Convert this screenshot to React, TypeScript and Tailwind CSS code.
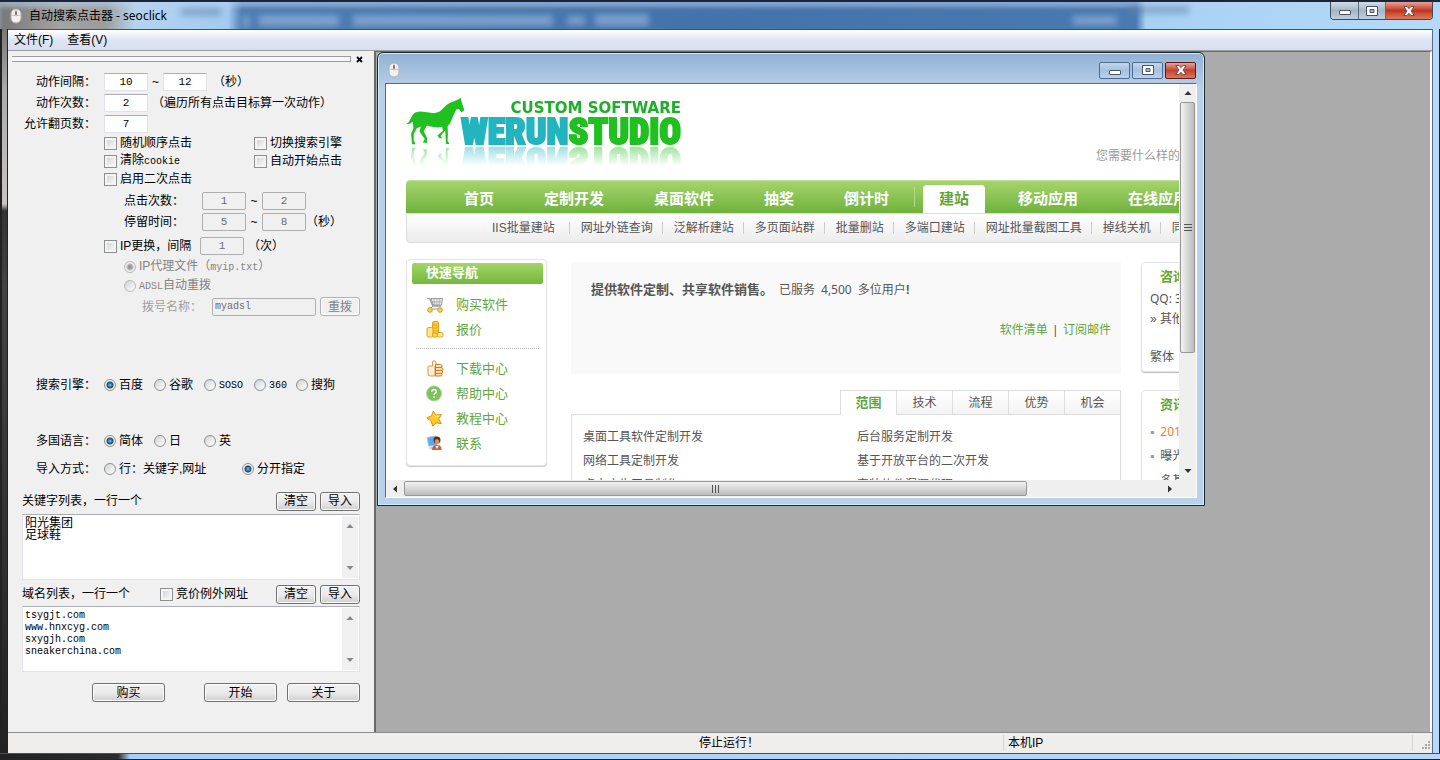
/**
 * Seoclick main window
 *
 * - Title bar, menu bar and status bar
 * - Docked settings panel on the left
 * - MDI area with the embedded browser window
 */

import React, { useState } from 'react';

const NAV_LEFT = ['首页', '定制开发', '桌面软件', '抽奖', '倒计时'];
const NAV_RIGHT = ['移动应用', '在线应用'];

const SUB_NAV = [
  'IIS批量建站',
  '网址外链查询',
  '泛解析建站',
  '多页面站群',
  '批量删站',
  '多端口建站',
  '网址批量截图工具',
  '掉线关机',
  '同步工具',
];

const TABS = ['范围', '技术', '流程', '优势', '机会'];

/* ---------- Icons ---------- */

const MouseIcon: React.FC = () => (
  <svg width="12" height="16" viewBox="0 0 12 16" className="shrink-0">
    <rect x="1" y="1" width="10" height="14" rx="5" fill="#f4f2f0" stroke="#b5b0ad" />
    <path d="M6 1v6M1.500 7q4.500 1.500 9 0" stroke="#c2bdba" fill="none" />
    <rect x="5" y="3" width="2" height="4" rx="1" fill="#777" />
  </svg>
);

const MinimizeGlyph: React.FC = () => (
  <svg width="12" height="11" viewBox="0 0 12 11">
    <rect x="0.500" y="5.500" width="11" height="4" rx="0.500" fill="#fff" stroke="#4a5568" />
  </svg>
);

const MaximizeGlyph: React.FC = () => (
  <svg width="12" height="10" viewBox="0 0 12 10">
    <path d="M.5.5h11v9H.5zM4 3.500v3h4v-3z" fill="#fff" stroke="#4a5568" fillRule="evenodd" />
  </svg>
);

const CloseGlyph: React.FC = () => (
  <svg width="12" height="10" viewBox="0 0 12 10">
    <path
      d="M.8.5h3.200L6 2.700 8 .5h3.200L8 5l3.200 4.500H8L6 7.300 4 9.500H.8L4 5z"
      fill="#fff"
      stroke="#5b3a3a"
      strokeWidth="0.800"
    />
  </svg>
);

const CartIcon: React.FC = () => (
  <svg width="18" height="16" viewBox="0 0 18 16" fill="none">
    <path d="M1 1l3 1 3 7h8" stroke="#999" strokeWidth="1.300" />
    <path d="M5 1.500h11.500l-1 6.500H7.500z" fill="#ececec" stroke="#999" />
    <path d="M8 2l1 6M11 2v6M13.800 2l-.6 6M6 4.800h10" stroke="#aaa" strokeWidth="0.800" />
    <path d="M7 9l-3 3h10" stroke="#999" />
    <circle cx="4" cy="13" r="2.300" fill="#fcd34d" stroke="#d99a10" />
    <circle cx="14" cy="13" r="2.300" fill="#fcd34d" stroke="#d99a10" />
  </svg>
);

const CoinsIcon: React.FC = () => (
  <svg width="18" height="17" viewBox="0 0 18 17" stroke="#dca41c">
    <rect x="6.500" y="0.500" width="6" height="14" rx="1.500" fill="#fbc932" />
    <path d="M7 4h5M7 7h5M7 10h5" strokeWidth="0.800" />
    <rect x="1" y="6.500" width="6" height="9.500" rx="1.500" fill="#fde58a" />
    <rect x="6.500" y="12" width="5" height="4" rx="1" fill="#fcd34d" />
    <rect x="11.500" y="11.500" width="5.500" height="4.500" rx="1.500" fill="#fdeaa8" />
  </svg>
);

const ThumbIcon: React.FC = () => (
  <svg width="18" height="17" viewBox="0 0 18 17" strokeLinejoin="round">
    <path
      d="M3 6h3.500V3Q6.500.8 8.200.8T10 3v3H9v10H4.500Q2 16 2 13.500V7q0-1 1-1z"
      fill="#ffecd4"
      stroke="#d6974c"
    />
    <path
      d="M9.500 4.500h5q1.500.1 1.500 1.500t-.8 1.400q1.800.2 1.800 1.700t-1.500 1.500q1.300.2 1.200 1.500t-1.400 1.300q1 .2.900 1.300T14.500 16h-5z"
      fill="#ffe0b8"
      stroke="#c67c2c"
    />
    <path d="M10 7.500h5.500M10 10.500h6M10 13.400h5.500" stroke="#c67c2c" />
  </svg>
);

const HelpIcon: React.FC = () => (
  <svg width="17" height="17" viewBox="0 0 17 17">
    <circle cx="8" cy="8.500" r="7.500" fill="#7cc15c" stroke="#a9d895" />
    <path
      d="M5.800 6.800Q6 4.600 8 4.600q2.200.1 2.200 2 0 1.100-1.200 1.800-.9.600-.9 1.500M8.100 11.300v1.400"
      fill="none"
      stroke="#fff"
      strokeWidth="1.500"
    />
  </svg>
);

const StarIcon: React.FC = () => (
  <svg width="17" height="17" viewBox="0 0 17 17">
    <path
      d="M7.300 1l2.600 4 5.600-.5-2.700 4.400 2.500 4.700-5.300-.7-3.300 3.300-1.500-5L.8 8l4.700-2.300z"
      fill="#fdc92c"
      stroke="#d8960c"
      strokeLinejoin="round"
    />
    <path d="M7 3.700l2.300 2.700 3.700-.4" fill="none" stroke="#fff0a0" />
  </svg>
);

const ContactIcon: React.FC = () => (
  <svg width="17" height="17" viewBox="0 0 17 17">
    <path d="M1.500 2.500L10 1l1 9-8.500 1z" fill="#5aa9ec" stroke="#9dbfdf" />
    <path d="M2 13l4-2 3 2-3 2z" fill="#c9d2da" />
    <circle cx="11" cy="5" r="3.500" fill="#51301f" />
    <ellipse cx="11" cy="6.500" rx="2.300" ry="2.500" fill="#f08848" />
    <path d="M6 15q0-5 5-5t4.500 5z" fill="#c8603c" />
    <path d="M9.500 11h3L11 14z" fill="#fff" />
  </svg>
);

const LogoDrawing: React.FC = () => (
  <svg
    width="290"
    height="48"
    viewBox="0 0 290 48"
    className="block [-webkit-box-reflect:below_0px_linear-gradient(transparent_58%,rgba(0,0,0,0.45))]"
  >
    <g transform="translate(-6 -6) scale(0.335)">
      <path
        d="M19 95C29 91 30 80 38 68C45 58 60 56 75 60C90 63 105 64 118 58C130 50 140 32 160 28L175 22L181 17L184 30L192 54L184 61L176 51L168 52C162 62 158 74 153 86C150 94 146 98 142 102L143 125L142 146L148 155L137 155L136 130L135 115L121 131L126 138L117 138L112 130L128 116L126 104C110 108 95 104 80 100L71 117L81 137L80 152L68 151L74 140L58 118L62 103L50 108L41 125L41 145L47 156L36 156L33 125L40 108L38 88C34 92 28 98 19 95Z"
        fill="#1fc01f"
      />
    </g>
    <text
      x="275"
      y="15"
      textAnchor="end"
      fill="#1fae2c"
      className="font-['DejaVu_Sans',sans-serif] text-[15px] font-bold"
    >
      CUSTOM SOFTWARE
    </text>
    <text
      x="55"
      y="46"
      strokeWidth="2"
      className="font-['Roboto_Condensed',Roboto,sans-serif] text-[36px] font-black"
    >
      <tspan fill="#22b5bf" stroke="#22b5bf">WERUN</tspan>
      <tspan fill="#1fc01f" stroke="#1fc01f">STUDIO</tspan>
    </text>
  </svg>
);

const SIDE_GROUPS = [
  [
    { label: '购买软件', Icon: CartIcon },
    { label: '报价', Icon: CoinsIcon },
  ],
  [
    { label: '下载中心', Icon: ThumbIcon },
    { label: '帮助中心', Icon: HelpIcon },
    { label: '教程中心', Icon: StarIcon },
    { label: '联系', Icon: ContactIcon },
  ],
];

// Desktop showing through the glass title bar
const GlassBackdrop: React.FC = () => (
  <svg height="27" className="min-w-0 flex-1 blur-[3px]" aria-hidden="true">
    <g fill="#9dbbe0" opacity="0.6">
      <rect x="76" y="14" width="6" height="12" />
      <rect x="92" y="13" width="80" height="11" />
      <rect x="186" y="13" width="200" height="11" />
      <rect x="400" y="14" width="18" height="9" />
      <rect x="428" y="12" width="54" height="12" />
      <rect x="906" y="14" width="44" height="9" />
    </g>
    <g fill="#5d7fa5" opacity="0.5">
      <rect x="14" y="6" width="40" height="8" />
      <rect x="960" y="4" width="62" height="8" />
    </g>
  </svg>
);

/* ---------- Form controls ---------- */

// Latin text inside the form uses a half-width face
const Mono: React.FC<{ children: React.ReactNode }> = ({ children }) => (
  <span className="font-['Liberation_Mono',monospace] text-[10px]">{children}</span>
);

interface CheckProps {
  children: React.ReactNode;
  className?: string;
}

const Check: React.FC<CheckProps> = ({ children, className = '' }) => (
  <label className={`flex items-center gap-[3px] whitespace-nowrap ${className}`}>
    <input
      type="checkbox"
      className="h-[13px] w-[13px] shrink-0 appearance-none border border-[#8e8f8f] bg-linear-to-br from-[#c9cdd2] to-white shadow-[inset_0_0_0_2px_#f4f4f4] checked:bg-[#2a6a9a]"
    />
    <span>{children}</span>
  </label>
);

interface RadioProps extends CheckProps {
  name: string;
  defaultChecked?: boolean;
  disabled?: boolean;
}

const Radio: React.FC<RadioProps> = ({ children, name, defaultChecked, disabled, className = '' }) => (
  <label className={`flex items-center gap-[3px] whitespace-nowrap ${disabled ? 'text-[#838383]' : ''} ${className}`}>
    <input
      type="radio"
      name={name}
      defaultChecked={defaultChecked}
      disabled={disabled}
      className="h-3 w-3 shrink-0 appearance-none rounded-full border border-[#8e8f8f] bg-linear-to-br from-[#cfd3d6] to-white checked:bg-[radial-gradient(circle,#7cc4e8_0,#14456f_3px,#f2f2f2_4px)] disabled:border-[#b9b9b9] disabled:checked:bg-[radial-gradient(circle,#999_0,#999_2px,#eee_4px)]"
    />
    <span>{children}</span>
  </label>
);

interface NumProps {
  value: string;
  label: string;
  disabled?: boolean;
}

const Num: React.FC<NumProps> = ({ value, label, disabled }) => (
  <input
    type="text"
    aria-label={label}
    defaultValue={value}
    disabled={disabled}
    className="h-[18px] w-11 shrink-0 border border-[#e2e3ea] border-t-[#abadb3] bg-white text-center font-['Liberation_Mono',monospace] text-[11px] disabled:rounded-xs disabled:border-[#afafaf] disabled:bg-[#f0f0f0] disabled:text-[#6d6d6d]"
  />
);

interface PushButtonProps {
  children: React.ReactNode;
  wide?: boolean;
  disabled?: boolean;
}

const PushButton: React.FC<PushButtonProps> = ({ children, wide, disabled }) => (
  <button
    type="button"
    disabled={disabled}
    className={`flex h-[19px] items-center justify-center rounded-[3px] border border-[#707070] bg-linear-to-b from-[#f2f2f2] via-[#ebebeb] to-[#cfcfcf] shadow-[inset_0_0_0_1px_#fcfcfc] disabled:border-[#adb2b5] disabled:bg-none disabled:text-[#838383] ${
      wide ? 'w-[73px]' : 'w-10'
    }`}
  >
    {children}
  </button>
);

interface RowProps {
  label?: string;
  className?: string;
  children: React.ReactNode;
}

const Row: React.FC<RowProps> = ({ label, className = 'h-[21px]', children }) => (
  <div className={`flex items-center ${className}`}>
    <span className="w-24 shrink-0 pr-2 text-right">{label}</span>
    {children}
  </div>
);

const Arrow: React.FC<{ dir: 'up' | 'down' | 'left' | 'right'; className?: string }> = ({ dir, className = 'fill-[#333]' }) => (
  <svg width="8" height="8" viewBox="0 0 8 8" className={className}>
    {dir === 'up' && <path d="M0.500 6h7L4 2z" />}
    {dir === 'down' && <path d="M0.500 2h7L4 6z" />}
    {dir === 'left' && <path d="M6 0.500v7L2 4z" />}
    {dir === 'right' && <path d="M2 0.500v7L6 4z" />}
  </svg>
);

interface ListBoxProps {
  label: string;
  value: string;
  className: string;
}

const ListBox: React.FC<ListBoxProps> = ({ label, value, className }) => (
  <div className="ml-3.5 flex h-[66px] border border-[#e2e3ea] border-t-[#abadb3] bg-white">
    <textarea
      aria-label={label}
      defaultValue={value}
      className={`min-w-0 flex-1 resize-none overflow-hidden bg-transparent px-0.5 leading-3 outline-none ${className}`}
    />
    <div className="m-px flex w-4 flex-col items-center justify-between bg-[#f0f0f0] py-1.5">
      <Arrow dir="up" className="fill-[#888]" />
      <Arrow dir="down" className="fill-[#888]" />
    </div>
  </div>
);

/* ---------- Settings panel ---------- */

const SettingsPanel: React.FC = () => (
  <form className="w-[368px] shrink-0 overflow-hidden border-r-2 border-[#6a6a6a] bg-[#f0f0f0] pr-3.5 text-xs leading-4 text-black">
    <div className="flex h-5 items-center pb-1 pl-1">
      <div className="h-1.5 w-[339px] shrink-0 border-y border-r border-[#9a9a9a] bg-[#f8f8f8]" />
      <button type="button" aria-label="关闭" className="flex h-4 w-4 shrink-0 items-center justify-center">
        <svg width="7" height="7" viewBox="0 0 7 7">
          <path d="M1 1l5 5M6 1L1 6" stroke="#000" strokeWidth="1.800" />
        </svg>
      </button>
    </div>

    <Row label="动作间隔：">
      <Num label="动作间隔最小值" value="10" />
      <span className="w-[15px] text-center">~</span>
      <Num label="动作间隔最大值" value="12" />
      <span className="pl-1.5">（秒）</span>
    </Row>
    <Row label="动作次数：">
      <Num label="动作次数" value="2" />
      <span className="pl-1">（遍历所有点击目标算一次动作）</span>
    </Row>
    <Row label="允许翻页数：">
      <Num label="允许翻页数" value="7" />
    </Row>

    <Row className="h-[18px]">
      <Check className="w-[150px]">随机顺序点击</Check>
      <Check>切换搜索引擎</Check>
    </Row>
    <Row className="h-[18px]">
      <Check className="w-[150px]">
        清除<Mono>cookie</Mono>
      </Check>
      <Check>自动开始点击</Check>
    </Row>
    <Row className="h-[18px]">
      <Check>启用二次点击</Check>
    </Row>

    <Row className="mt-0.5 h-[21px]">
      <span className="w-[98px] pl-5">点击次数：</span>
      <Num label="点击次数最小值" value="1" disabled />
      <span className="w-4 text-center">~</span>
      <Num label="点击次数最大值" value="2" disabled />
    </Row>
    <Row>
      <span className="w-[98px] pl-5">停留时间：</span>
      <Num label="停留时间最小值" value="5" disabled />
      <span className="w-4 text-center">~</span>
      <Num label="停留时间最大值" value="8" disabled />
      <span>（秒）</span>
    </Row>
    <Row className="mt-0.5 h-6">
      <Check className="w-24">IP更换，间隔</Check>
      <Num label="IP更换间隔" value="1" disabled />
      <span className="pl-1">（次）</span>
    </Row>
    <Row className="h-[18px]">
      <Radio name="ip" className="pl-5" defaultChecked disabled>
        IP代理文件（<Mono>myip.txt</Mono>）
      </Radio>
    </Row>
    <Row className="h-5">
      <Radio name="ip" className="pl-5" disabled>
        <Mono>ADSL</Mono>自动重拨
      </Radio>
    </Row>
    <Row>
      <label htmlFor="dial" className="w-[108px] pl-[38px] text-[#a0a0a0]">
        拨号名称：
      </label>
      <input
        id="dial"
        type="text"
        defaultValue="myadsl"
        disabled
        className="mr-1 h-[18px] w-[104px] rounded-xs border border-[#afafaf] bg-[#f0f0f0] px-0.5 font-['Liberation_Mono',monospace] text-[10px] text-[#6d6d6d]"
      />
      <PushButton disabled>重拨</PushButton>
    </Row>

    <Row label="搜索引擎：" className="mt-14 h-6">
      <Radio name="engine" className="w-[50px]" defaultChecked>百度</Radio>
      <Radio name="engine" className="w-[50px]">谷歌</Radio>
      <Radio name="engine" className="w-[50px]">
        <Mono>SOSO</Mono>
      </Radio>
      <Radio name="engine" className="w-[42px]">
        <Mono>360</Mono>
      </Radio>
      <Radio name="engine">搜狗</Radio>
    </Row>

    <Row label="多国语言：" className="mt-8 h-6">
      <Radio name="lang" className="w-[50px]" defaultChecked>简体</Radio>
      <Radio name="lang" className="w-[50px]">日</Radio>
      <Radio name="lang">英</Radio>
    </Row>
    <Row label="导入方式：" className="mt-1 h-6">
      <Radio name="import" className="w-[138px]">行：关键字,网址</Radio>
      <Radio name="import" defaultChecked>分开指定</Radio>
    </Row>

    <div className="mt-2.5 mb-[3px] flex h-5 items-center pl-3.5">
      <span className="flex-1">关键字列表，一行一个</span>
      <div className="flex gap-1">
        <PushButton>清空</PushButton>
        <PushButton>导入</PushButton>
      </div>
    </div>
    <ListBox label="关键字列表" value={'阳光集团\n足球鞋'} className="pt-0.5 text-xs" />

    <div className="mt-1 mb-0.5 flex h-5 items-center pl-3.5">
      <span className="w-[138px]">域名列表，一行一个</span>
      <Check className="flex-1">竞价例外网址</Check>
      <div className="flex gap-1">
        <PushButton>清空</PushButton>
        <PushButton>导入</PushButton>
      </div>
    </div>
    <ListBox
      label="域名列表"
      value={'tsygjt.com\nwww.hnxcyg.com\nsxygjh.com\nsneakerchina.com'}
      className="pt-[3px] font-['Liberation_Mono',monospace] text-[10px]"
    />

    <div className="mt-[11px] flex justify-end">
      <PushButton wide>购买</PushButton>
      <div className="ml-[39px] flex gap-2.5">
        <PushButton wide>开始</PushButton>
        <PushButton wide>关于</PushButton>
      </div>
    </div>
  </form>
);

/* ---------- Web page shown in the browser window ---------- */

const SitePage: React.FC = () => {
  const [tab, setTab] = useState('范围');

  return (
    <div className="w-[980px] pt-3.5 pl-5 text-xs text-[#555]">
      <div className="flex h-[82px] justify-between">
        <LogoDrawing />
        <p className="w-[270px] pt-[50px] leading-4 text-[#999]">您需要什么样的软件？</p>
      </div>

      <nav className="flex h-[33px] items-end rounded-tl-sm border-t border-[#bfe096] bg-linear-to-b from-[#a5d46c] to-[#6fb23c] pl-[33px] text-[15px] font-bold text-white">
        {NAV_LEFT.map((item) => (
          <a key={item} href="#" className="flex h-7 items-center px-[25px]">
            {item}
          </a>
        ))}
        <span className="mb-1.5 h-5 w-px bg-[#b5dc8a]" />
        <a href="#" className="mr-2 ml-2 flex h-7 items-center rounded-t bg-white px-4 text-[#5fa637]">
          建站
        </a>
        {NAV_RIGHT.map((item) => (
          <a key={item} href="#" className="flex h-7 items-center px-[25px]">
            {item}
          </a>
        ))}
      </nav>
      <nav className="flex h-[30px] items-center rounded-bl border border-[#dcdcdc] bg-linear-to-b from-white to-[#ececec] pl-[85px]">
        {SUB_NAV.map((item) => (
          <React.Fragment key={item}>
            <a href="#" className="shrink-0 pr-[9px] first:pr-3.5">
              {item}
            </a>
            <span className="mr-[11px] h-3 w-px bg-[#ccc]" />
          </React.Fragment>
        ))}
      </nav>

      <div className="mt-4 flex items-start">
        {/* Quick navigation */}
        <aside className="h-[207px] w-[141px] shrink-0 rounded border border-[#e4e4e4] bg-white pt-[3px] pr-[3px] pl-[5px] shadow-[0_1px_1px_#ccc]">
          <h2 className="h-[21px] rounded-xs bg-linear-to-b from-[#a3d465] to-[#74b83c] pl-3.5 text-[13px] leading-5 font-bold text-white">
            快速导航
          </h2>
          <div className="mt-2">
            {SIDE_GROUPS.map((group, i) => (
              <ul key={i} className={i > 0 ? 'mx-1 mt-1.5 border-t border-dotted border-[#bbb] pt-[7px]' : 'mx-1'}>
                {group.map(({ label, Icon }) => (
                  <li key={label}>
                    <a href="#" className="flex h-[25px] items-center gap-3 pl-2.5 text-[13px] text-[#63a63c]">
                      <span className="w-[18px]">
                        <Icon />
                      </span>
                      {label}
                    </a>
                  </li>
                ))}
              </ul>
            ))}
          </div>
        </aside>

        {/* Main column */}
        <section className="ml-6 w-[550px] shrink-0 pt-[3px]">
          <div className="h-[112px] bg-[#f9f9f9] px-5 pt-[18px]">
            <p className="leading-5">
              <b className="text-[13px]">提供软件定制、共享软件销售。</b>
              <span className="pl-1.5">已服务</span>
              <span className="px-1.5 font-['Noto_Sans',sans-serif]">4,500</span>
              多位用户<b>!</b>
            </p>
            <p className="-mr-2.5 mt-5 flex justify-end gap-1.5 leading-5">
              <a href="#" className="text-[#5fa637]">软件清单</a>
              <span className="text-[#8a4a3a]">|</span>
              <a href="#" className="text-[#5fa637]">订阅邮件</a>
            </p>
          </div>

          <div className="mt-4 flex">
            <div className="flex-1 border-b border-[#ddd]" />
            {TABS.map((item) => (
              <button
                key={item}
                type="button"
                onClick={() => setTab(item)}
                className={`h-[25px] w-14 border-t border-l border-[#ddd] last:w-[57px] last:border-r ${
                  tab === item
                    ? 'bg-white text-[13px] font-bold text-[#5fa637]'
                    : 'border-b bg-linear-to-b from-white to-[#f3f3f3]'
                }`}
              >
                {item}
              </button>
            ))}
          </div>
          <div className="grid grid-cols-[274px_1fr] border-x border-[#ddd] px-[11px] pt-2.5 leading-6">
            <span>桌面工具软件定制开发</span>
            <span>后台服务定制开发</span>
            <span>网络工具定制开发</span>
            <span>基于开放平台的二次开发</span>
            <span>点击广告工具制作</span>
            <span>安装软件漏洞代理</span>
          </div>
        </section>

        {/* Right column */}
        <div className="ml-5 w-[180px] shrink-0 pt-[3px]">
          <div className="h-[110px] rounded border border-[#e4e4e4] px-2 pt-0.5 shadow-[0_1px_1px_#bbb]">
            <h2 className="pl-2.5 text-[13px] leading-6 font-bold text-[#5fa637]">咨询</h2>
            <p className="font-['Noto_Sans','Noto_Sans_CJK_SC',sans-serif] leading-5">QQ: 3</p>
            <p className="leading-5">» 其他</p>
            <p className="mt-[18px] leading-5">繁体</p>
          </div>
          <div className="mt-[18px] h-[120px] rounded border border-[#e4e4e4] px-2 pt-0.5">
            <h2 className="mb-0.5 pl-2.5 text-[13px] leading-6 font-bold text-[#5fa637]">资讯</h2>
            <ul className="leading-[25px]">
              <li className="font-['Noto_Sans',sans-serif] text-[#f08030]">
                <span className="pr-1.5 text-[#999]">▪</span>2012
              </li>
              <li>
                <span className="pr-1.5 text-[#999]">▪</span>曝光
              </li>
              <li>
                <span className="pr-1.5 text-[#999]">▪</span>多基
              </li>
            </ul>
          </div>
        </div>
      </div>
    </div>
  );
};

const ChildWindow: React.FC = () => (
  <section className="ml-px flex h-[454px] w-[828px] max-w-full flex-col rounded-t-md border border-[#1c2a33] bg-linear-to-b from-[#93b1d3] via-[#b9d1ea] via-8% to-[#b9d1ea] px-[7px] pb-[7px] shadow-[inset_0_0_0_1px_#c5f0fa]">
    <header className="flex h-[30px] shrink-0 items-center justify-between pt-1 pr-px pl-[3px]">
      <MouseIcon />
      <div className="flex gap-0.5">
        <button type="button" aria-label="最小化" className="flex h-[17px] w-[31px] items-center justify-center rounded-xs border border-[#4f6a8c] bg-linear-to-b from-[#c3d7ee] via-[#a5c0de] to-[#b9d3ee]">
          <MinimizeGlyph />
        </button>
        <button type="button" aria-label="最大化" className="flex h-[17px] w-[31px] items-center justify-center rounded-xs border border-[#4f6a8c] bg-linear-to-b from-[#c3d7ee] via-[#a5c0de] to-[#b9d3ee]">
          <MaximizeGlyph />
        </button>
        <button type="button" aria-label="关闭" className="flex h-[17px] w-[31px] items-center justify-center rounded-xs border border-[#5c1a1a] bg-linear-to-b from-[#e3a498] via-[#c4402c] to-[#d8785c]">
          <CloseGlyph />
        </button>
      </div>
    </header>

    <div className="grid min-h-0 flex-1 grid-cols-[minmax(0,1fr)_17px] grid-rows-[minmax(0,1fr)_17px] border border-white border-t-[#5e6a78] border-l-[#5e6a78] bg-white">
      <div className="overflow-hidden">
        <SitePage />
      </div>
      <div className="flex flex-col items-center bg-[#efefef]">
        <span className="flex h-[18px] shrink-0 items-center">
          <Arrow dir="up" />
        </span>
        <div className="flex h-[251px] w-[15px] flex-col items-center justify-center gap-0.5 rounded-xs border border-[#979797] bg-linear-to-r from-[#f3f3f3] to-[#bcbcbc]">
          <span className="h-px w-2 bg-[#555]" />
          <span className="h-px w-2 bg-[#555]" />
          <span className="h-px w-2 bg-[#555]" />
        </div>
        <span className="mt-auto flex h-[18px] items-center">
          <Arrow dir="down" />
        </span>
      </div>
      <div className="flex items-center bg-[#efefef]">
        <span className="flex w-[18px] justify-center">
          <Arrow dir="left" />
        </span>
        <div className="flex h-[15px] w-[623px] items-center justify-center gap-0.5 rounded-xs border border-[#979797] bg-linear-to-b from-[#f3f3f3] to-[#bcbcbc]">
          <span className="h-2 w-px bg-[#555]" />
          <span className="h-2 w-px bg-[#555]" />
          <span className="h-2 w-px bg-[#555]" />
        </div>
        <span className="ml-auto flex w-[18px] justify-center">
          <Arrow dir="right" />
        </span>
      </div>
      <div className="bg-[#efefef]" />
    </div>
  </section>
);

/* ---------- Main window ---------- */

const App: React.FC = () => {
  return (
    <div className="flex h-screen min-h-[760px] flex-col overflow-hidden bg-[#b5d6f7] font-['Liberation_Sans','Noto_Sans_CJK_SC',sans-serif] text-xs text-black">
      <header className="flex h-[29px] shrink-0 items-start justify-between overflow-hidden border-t-2 border-[#1b2438] bg-[linear-gradient(90deg,#777_0,#a3a3a3_60px,#9c9c9c_105px,#b4d4f0_135px,#a3cbf0_228px,#4f7db2_242px,#4472ab_700px,#4a7ab2_1136px,#a9d1f5_1146px,#b4daf8_100%)] pr-[7px] shadow-[inset_0_5px_4px_#b9d2ee88]">
        <div className="flex h-[27px] items-center gap-[7px] pl-2.5">
          <MouseIcon />
          <h1 className="font-['Noto_Sans','Noto_Sans_CJK_SC',sans-serif]">自动搜索点击器 - seoclick</h1>
        </div>
        <GlassBackdrop />
        <div className="flex h-[18px] overflow-hidden rounded-b border border-t-0 border-[#3d4a5a]">
          <button type="button" aria-label="最小化" className="flex w-7 items-center justify-center border-r border-[#5c6c80] bg-linear-to-b from-[#d3dde8] via-[#a5b5c6] to-[#bfd0e2]">
            <MinimizeGlyph />
          </button>
          <button type="button" aria-label="最大化" className="flex w-[27px] items-center justify-center border-r border-[#5c6c80] bg-linear-to-b from-[#d3dde8] via-[#a5b5c6] to-[#bfd0e2]">
            <MaximizeGlyph />
          </button>
          <button type="button" aria-label="关闭" className="flex w-[46px] items-center justify-center bg-linear-to-b from-[#e8a395] via-[#bf3420] to-[#dc7a55]">
            <CloseGlyph />
          </button>
        </div>
      </header>

      <div className="flex min-h-0 flex-1">
        <div className="w-2 shrink-0 border-r border-l-2 border-[#222] bg-[linear-gradient(180deg,#777_0,#aaa_60px,#c9c4c4_175px,#333_182px,#444_260px,#222_100%)]" />

        <div className="flex min-w-0 flex-1 flex-col border-t border-[#46505c]">
          <nav className="flex h-[21px] shrink-0 items-center gap-3.5 border-b border-[#a0a0a0] bg-linear-to-b from-white via-[#e0e5f3] to-[#d8def0] pl-1.5">
            <button type="button">文件(F)</button>
            <button type="button">查看(V)</button>
          </nav>

          <div className="flex min-h-0 flex-1">
            <SettingsPanel />
            <main className="min-w-0 flex-1 overflow-hidden border-t border-r-2 border-t-[#696969] border-r-white bg-[#ababab]">
              <ChildWindow />
            </main>
          </div>

          <footer className="flex h-[21px] shrink-0 items-center border-t border-[#8c8c8c] bg-[#f0eeed]">
            <span className="flex-1" />
            <span className="w-[304px]">停止运行！</span>
            <span className="w-[409px] border-l border-[#d5d5d5] pl-1">本机IP</span>
            <span className="flex h-4 w-5 items-end justify-end border-l border-[#d5d5d5]">
              <svg width="10" height="10" viewBox="0 0 10 10" fill="#aaa">
                <path d="M6 0h2v2H6zM3 3h2v2H3zM6 3h2v2H6zM0 6h2v2H0zM3 6h2v2H3zM6 6h2v2H6z" />
              </svg>
            </span>
          </footer>
        </div>

        <div className="w-2 shrink-0 border-r border-l border-r-[#1b2438] border-l-[#5c7088] bg-[#b8d9f8]" />
      </div>

      <div className="h-[7px] shrink-0 border-t border-b border-t-[#46505c] border-b-[#1b2438] bg-[linear-gradient(90deg,#222_0,#2b2b2e_118px,#a9cdf5_130px,#b8daf8_100%)]" />
    </div>
  );
};

export default App;
